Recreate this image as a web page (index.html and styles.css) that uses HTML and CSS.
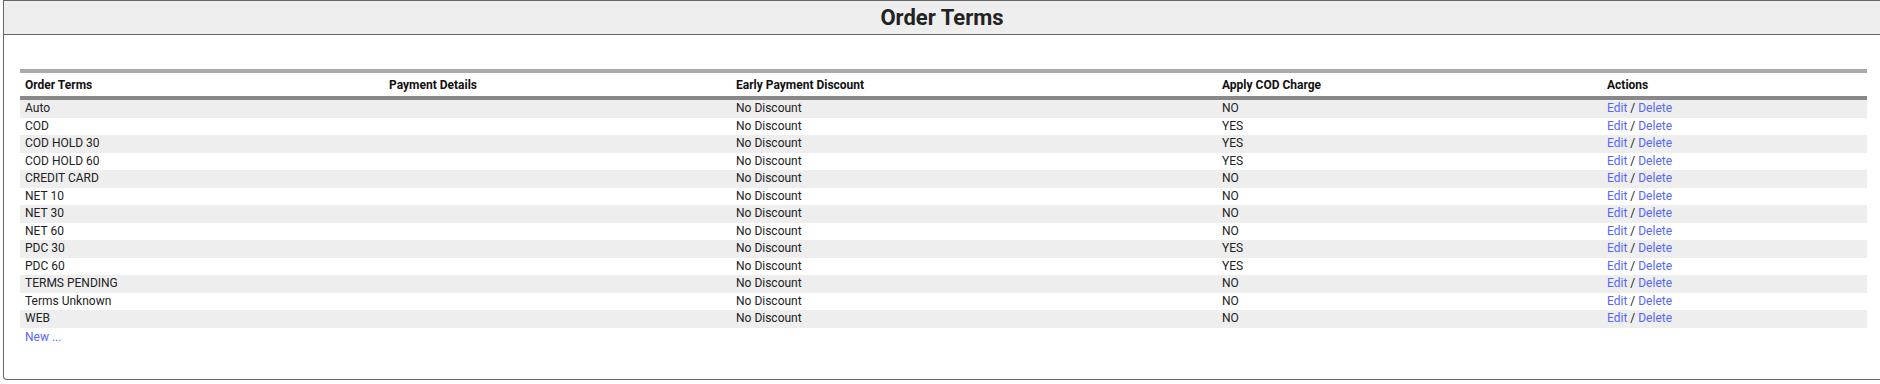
FILE: index.html
```html
<!DOCTYPE html>
<html>
<head>
<meta charset="utf-8">
<link rel="stylesheet" href="styles.css">
</head>
<body>
<div class="panel">
  <div class="panel-head"><h1 class="title">Order Terms</h1></div>
  <div class="panel-body">
    <table class="grid">
      <colgroup>
        <col class="c1"><col class="c2"><col class="c3"><col class="c4"><col class="c5">
      </colgroup>
      <thead>
        <tr><th>Order Terms</th><th>Payment Details</th><th>Early Payment Discount</th><th>Apply COD Charge</th><th>Actions</th></tr>
      </thead>
      <tbody>
        <tr><td>Auto</td><td></td><td>No Discount</td><td>NO</td><td><a href="#">Edit</a> / <a href="#">Delete</a></td></tr>
        <tr><td>COD</td><td></td><td>No Discount</td><td>YES</td><td><a href="#">Edit</a> / <a href="#">Delete</a></td></tr>
        <tr><td>COD HOLD 30</td><td></td><td>No Discount</td><td>YES</td><td><a href="#">Edit</a> / <a href="#">Delete</a></td></tr>
        <tr><td>COD HOLD 60</td><td></td><td>No Discount</td><td>YES</td><td><a href="#">Edit</a> / <a href="#">Delete</a></td></tr>
        <tr><td>CREDIT CARD</td><td></td><td>No Discount</td><td>NO</td><td><a href="#">Edit</a> / <a href="#">Delete</a></td></tr>
        <tr><td>NET 10</td><td></td><td>No Discount</td><td>NO</td><td><a href="#">Edit</a> / <a href="#">Delete</a></td></tr>
        <tr><td>NET 30</td><td></td><td>No Discount</td><td>NO</td><td><a href="#">Edit</a> / <a href="#">Delete</a></td></tr>
        <tr><td>NET 60</td><td></td><td>No Discount</td><td>NO</td><td><a href="#">Edit</a> / <a href="#">Delete</a></td></tr>
        <tr><td>PDC 30</td><td></td><td>No Discount</td><td>YES</td><td><a href="#">Edit</a> / <a href="#">Delete</a></td></tr>
        <tr><td>PDC 60</td><td></td><td>No Discount</td><td>YES</td><td><a href="#">Edit</a> / <a href="#">Delete</a></td></tr>
        <tr><td>TERMS PENDING</td><td></td><td>No Discount</td><td>NO</td><td><a href="#">Edit</a> / <a href="#">Delete</a></td></tr>
        <tr><td>Terms Unknown</td><td></td><td>No Discount</td><td>NO</td><td><a href="#">Edit</a> / <a href="#">Delete</a></td></tr>
        <tr><td>WEB</td><td></td><td>No Discount</td><td>NO</td><td><a href="#">Edit</a> / <a href="#">Delete</a></td></tr>
        <tr class="new-row"><td colspan="5"><a href="#">New ...</a></td></tr>
      </tbody>
    </table>
  </div>
</div>
</body>
</html>
```
FILE: styles.css
```css
html, body {
  margin: 0;
  padding: 0;
  background: #fff;
  overflow: hidden;
}
body {
  font-family: Roboto, "Liberation Sans", Arial, sans-serif;
  color: #222;
}
.panel {
  margin-left: 3px;
  border: 1px solid #666;
  border-right: none;
  border-bottom-left-radius: 4px;
  box-sizing: border-box;
  height: 380px;
}
.panel-head {
  height: 33px;
  background: #eee;
  border-bottom: 1px solid #666;
  display: flex;
  align-items: center;
  justify-content: center;
}
.title {
  margin: 0;
  font-size: 22px;
  font-weight: 700;
  color: #222;
  line-height: 1;
}
.panel-body {
  padding: 34px 0 0 16px;
}
.grid {
  width: 1847px;
  table-layout: fixed;
  border-collapse: collapse;
  border-top: 4px solid #aaa;
  font-size: 12px;
}
.c1 { width: 364px; }
.c2 { width: 347px; }
.c3 { width: 486px; }
.c4 { width: 385px; }
.c5 { width: 265px; }
.grid th {
  text-align: left;
  font-weight: 700;
  color: #111;
  height: 23px;
  padding: 0 5px;
  vertical-align: middle;
  border-bottom: 4px solid #888;
}
.grid td {
  padding: 1px 5px;
  line-height: 15.5px;
  color: #222;
  white-space: nowrap;
}
.grid tbody tr:nth-child(odd) {
  background: #eee;
}
.grid tbody tr.new-row {
  background: transparent;
}
.grid .new-row td {
  padding-top: 2px;
}
.grid a {
  color: #5566ff;
  text-decoration: none;
}
```
